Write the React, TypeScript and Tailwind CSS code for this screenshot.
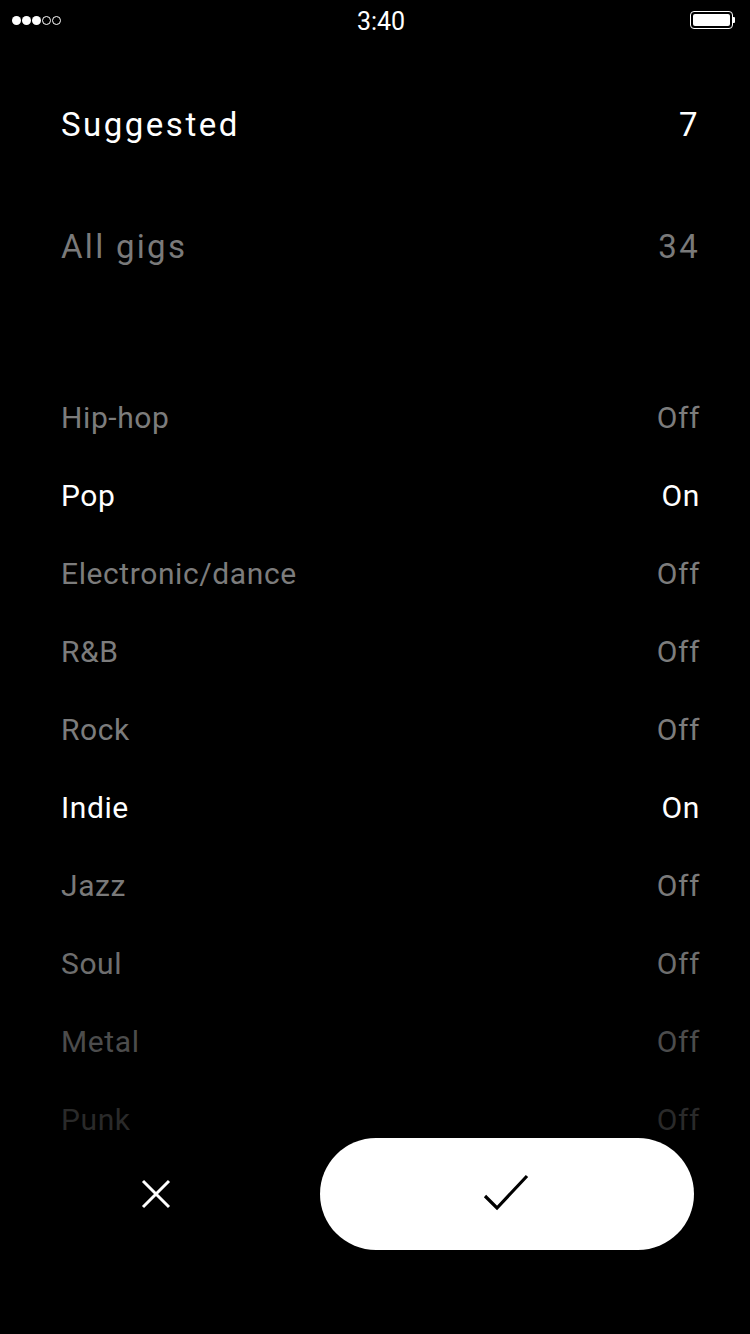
import React from "react";

const genres: { name: string; on: boolean; color: string }[] = [
  { name: "Hip-hop", on: false, color: "text-[#7c7c7c]" },
  { name: "Pop", on: true, color: "text-white" },
  { name: "Electronic/dance", on: false, color: "text-[#7c7c7c]" },
  { name: "R&B", on: false, color: "text-[#7c7c7c]" },
  { name: "Rock", on: false, color: "text-[#7c7c7c]" },
  { name: "Indie", on: true, color: "text-white" },
  { name: "Jazz", on: false, color: "text-[#7a7a7a]" },
  { name: "Soul", on: false, color: "text-[#6e6e6e]" },
  { name: "Metal", on: false, color: "text-[#4c4c4c]" },
  { name: "Punk", on: false, color: "text-[#2a2a2a]" },
];

export default function App() {
  return (
    <div
      className="relative w-[750px] h-[1334px] bg-black overflow-hidden text-white"
      style={{ fontFamily: "Roboto, 'Noto Sans', sans-serif" }}
    >
      {/* Status bar */}
      <div className="relative h-[40px] flex items-center justify-between px-[12px]">
        <div className="flex items-center gap-[1px]">
          {[0, 1, 2].map((i) => (
            <span key={i} className="w-[9px] h-[9px] rounded-full bg-white" />
          ))}
          {[0, 1].map((i) => (
            <span key={i} className="w-[9px] h-[9px] rounded-full border border-white" />
          ))}
        </div>
        <div className="absolute left-0 right-0 top-0 h-[40px] pt-[3px] pl-[12px] flex items-center justify-center text-[25px] font-normal">
          3:40
        </div>
        <div className="flex items-center mr-[3px]">
          <div className="w-[43px] h-[18px] rounded-[4px] border border-white p-[2px]">
            <div className="w-full h-full rounded-[2px] bg-white" />
          </div>
          <div className="w-[2px] h-[6px] bg-white rounded-r-[1px]" />
        </div>
      </div>

      {/* Tabs */}
      <div className="mt-[24px] pl-[61px] pr-[50px]">
        <div className="h-[122px] flex items-center justify-between text-[33px] font-normal tracking-[2.5px] text-white">
          <span>Suggested</span>
          <span>7</span>
        </div>
        <div className="h-[122px] flex items-center justify-between text-[33px] font-normal tracking-[2.3px] text-[#7a7a7a]">
          <span>All gigs</span>
          <span>34</span>
        </div>
      </div>

      {/* Genres */}
      <div className="mt-[70px] pl-[61px] pr-[50px]">
        {genres.map((g) => (
          <div
            key={g.name}
            className={`h-[78px] flex items-center justify-between text-[30px] font-normal tracking-[0.6px] ${g.color}`}
          >
            <span>{g.name}</span>
            <span>{g.on ? "On" : "Off"}</span>
          </div>
        ))}
      </div>

      {/* Bottom actions */}
      <div className="absolute left-0 right-0 bottom-[84px] h-[112px] flex items-center">
        <div className="w-[312px] h-[112px] flex items-center justify-center">
          <svg width="32" height="32" viewBox="0 0 32 32" fill="none">
            <path d="M3 3 L29 29 M29 3 L3 29" stroke="white" strokeWidth="3" />
          </svg>
        </div>
        <div className="ml-[8px] w-[374px] h-[112px] rounded-full bg-white flex items-center justify-center">
          <svg width="48" height="40" viewBox="0 0 48 40" fill="none">
            <path d="M2 22 L14 34 L44 2" stroke="black" strokeWidth="3.2" strokeLinejoin="miter" />
          </svg>
        </div>
      </div>
    </div>
  );
}
